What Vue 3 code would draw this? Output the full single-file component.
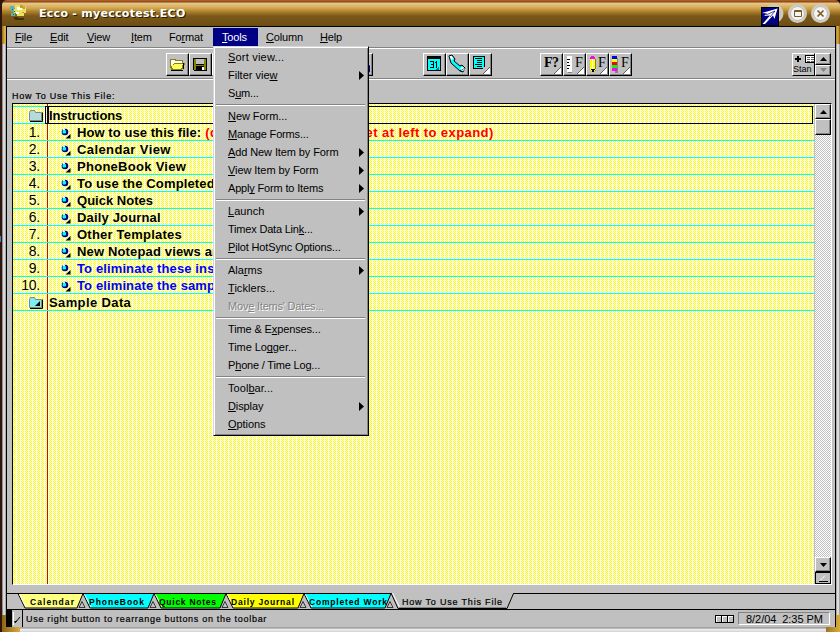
<script setup>
const menuBar = [
  { pre: '', key: 'F', post: 'ile', w: 35 },
  { pre: '', key: 'E', post: 'dit', w: 37 },
  { pre: '', key: 'V', post: 'iew', w: 44 },
  { pre: '', key: 'I', post: 'tem', w: 38 },
  { pre: 'Fo', key: 'r', post: 'mat', w: 44 },
  { pre: '', key: 'T', post: 'ools', w: 45, open: true },
  { pre: '', key: 'C', post: 'olumn', w: 54 },
  { pre: '', key: 'H', post: 'elp', w: 40 },
]
// An underscore precedes the mnemonic letter; ls is the tracking in pixels.
const groups = [
  [{ t: '_Sort view...', ls: 0.2 }, { t: 'Filter vie_w', sub: true, ls: 0 }, { t: 'S_um...', ls: -0.2 }],
  [{ t: '_New Form...', ls: -0.05 }, { t: '_Manage Forms...', ls: -0.17 }, { t: '_Add New Item by Form', sub: true, ls: -0.1 }, { t: '_View Item by Form', sub: true, ls: -0.07 }, { t: 'Appl_y Form to Items', sub: true, ls: -0.17 }],
  [{ t: '_Launch', sub: true, ls: 0.05 }, { t: 'Timex Data Lin_k...', ls: -0.2 }, { t: '_Pilot HotSync Options...', ls: -0.15 }],
  [{ t: 'Ala_rms', sub: true, ls: 0 }, { t: '_Ticklers...', ls: 0.05 }, { t: "Mov_e Items' Dates...", off: true, ls: -0.2 }],
  [{ t: 'Time & E_xpenses...', ls: -0.13 }, { t: 'Time Lo_gger...', ls: -0.08 }, { t: 'P_hone / Time Log...', ls: -0.18 }],
  [{ t: 'Tool_bar...', ls: 0.05 }, { t: '_Display', sub: true, ls: -0.1 }, { t: '_Options', ls: -0.05 }],
].map(g => g.map(i => {
  const n = i.t.indexOf('_')
  return { ...i, pre: i.t.slice(0, n), key: i.t[n + 1], post: i.t.slice(n + 2) }
}))
const rows = [
  { t: 'How to use this file:', red: '(double-click on the bullet at left to expand)', ls: 0.07 },
  { t: 'Calendar View', ls: 0.4 },
  { t: 'PhoneBook View', ls: 0.28 },
  { t: 'To use the Completed Work view', ls: 0.15 },
  { t: 'Quick Notes', ls: 0.02 },
  { t: 'Daily Journal', ls: 0.16 },
  { t: 'Other Templates', ls: 0.22 },
  { t: 'New Notepad views and folders', ls: 0.15 },
  { t: 'To eliminate these instructions', blue: true, ls: 0.12 },
  { t: 'To eliminate the sample data', blue: true, ls: 0.12 },
]
const tabs = [
  { t: 'Calendar', x: 18, r: 83, tx: 30, w: 44, c: '#ffff80' },
  { t: 'PhoneBook', x: 83, r: 154, tx: 89, w: 55, c: '#00ffff' },
  { t: 'Quick Notes', x: 154, r: 226, tx: 159, w: 57, c: '#00ff00' },
  { t: 'Daily Journal', x: 226, r: 304, tx: 231, w: 63, c: '#ffff00' },
  { t: 'Completed Work', x: 304, r: 391, tx: 309, w: 78, c: '#00ffff' },
]
</script>

<template>
  <div class="desk">
    <div class="win">
      <header class="title">
        <svg class="logo" width="18" height="18" viewBox="0 0 18 18" shape-rendering="crispEdges">
          <path d="M0 2h4v2h3v5h-2v3h-4v-3h2v-2h-2v-2h-1z" fill="#58b8b0" />
          <path d="M5 1h8v2h3v6h-2v3h-7v-3h-3v-4h1z" fill="#e8e060" />
          <path d="M7 3h5v3h-5zM6 8h3v2h-3z" fill="#fffff0" />
          <path d="M10 1h3v2h2v2h-2v-1h-3zM12 8h2v1h-2z" fill="#c8a018" />
          <path d="M4 13h4v1h6v2h-9z" fill="#3c3010" />
          <path d="M2 5h1v1h-1zM4 7h1v1h-1zM3 10h1v1h-1z" fill="#185860" />
        </svg>
        <span class="caption">Ecco - myeccotest.ECO</span>
        <svg class="tbtns" width="78" height="26" viewBox="0 0 78 26">
          <g stroke="#cfc9be" stroke-width="2" fill="#f4f4f4">
            <circle cx="18" cy="13.500" r="8.500" fill="#c8c4bc" />
            <circle cx="41.500" cy="13.500" r="8.500" />
            <circle cx="64.500" cy="13.500" r="8.500" />
          </g>
          <g stroke="#b8b2a6" stroke-width="1" fill="none">
            <circle cx="41.500" cy="13.500" r="7" />
            <circle cx="64.500" cy="13.500" r="7" />
          </g>
          <path d="M38.500 10.500h7v6h-7z M38 11.500h8" fill="none" stroke="#7b5a20" />
          <path d="M61.500 10.500l6 6M67.500 10.500l-6 6" stroke="#7b5a20" stroke-width="1.600" />
          <rect x="5" y="7" width="18" height="19" fill="#000" />
          <rect x="6" y="8" width="16" height="17" fill="#000084" />
          <path d="M21.500 8.500L18.500 19l-1.500-3.500-8 8.500h-2.500l7.500-8.500-6 .5 3-2.500-5-.5z" fill="#fff" />
          <path d="M19 11l-9 4M19 11l-5 6" stroke="#000084" stroke-width=".7" fill="none" />
        </svg>
      </header>

      <div class="body">
        <div class="client">
          <nav class="menubar">
            <div v-for="m in menuBar" :key="m.key" class="mi" :class="{ open: m.open }" :style="{ width: m.w + 'px' }">
              {{ m.pre }}<u>{{ m.key }}</u>{{ m.post }}
            </div>
          </nav>

          <div class="toolbar">
            <div class="tgroup g1">
              <button class="tb"><svg width="20" height="20" shape-rendering="crispEdges">
                <path d="M3 5h6v1h7v3h2v1l-3 6h-11v-2h-1z" fill="#848400" />
                <path d="M4 6h4v1h7v2h-8l-3 4z" fill="#fff" /><path d="M7 10h9l-2 5h-8l-2-4h3z" fill="#ffff60" />
                <path d="M4 16h12M16 15v-6" stroke="#000" fill="none" />
              </svg></button>
              <button class="tb"><svg width="20" height="20" shape-rendering="crispEdges">
                <path d="M3 4h14v13h-13l-1-1z" fill="#000" /><path d="M4 5h2v6h8v-6h2v11h-2v-4h-8v4h-2z" fill="#848400" />
                <path d="M6 5h8v5h-8z" fill="#c0c0c0" /><path d="M12 13h2v3h-2z" fill="#fff" />
              </svg></button>
              <button v-for="n in 7" :key="n" class="tb"><svg width="22" height="20"><path d="M15 11.500h3.500v6.500h-3.500z" fill="#fff" stroke="#000084" /></svg></button>
            </div>
            <div class="tgroup g2">
              <button class="tb"><svg width="20" height="20" shape-rendering="crispEdges">
                <path d="M3 2h14v15h-14z" fill="#000" /><path d="M4 5h12v11h-12z" fill="#0ff" /><path d="M15 12v4h-4z" fill="#008484" />
                <path d="M6 7h4v7h-4v-1h3v-2h-2v-1h2v-2h-3zM11 8h1v-1h1v7h-1v-5h-1z" fill="#000" />
              </svg></button>
              <button class="tb"><svg width="20" height="20">
                <path d="M2 2l3-1 3 4-1 2 6 5 2-1 3 3-2 4-3-1-9-8z" fill="#0ff" stroke="#000" />
                <path d="M2.500 2.500l2-.8 2 3-2 1.500zM13 14l3-1 2 2-2 2z" fill="#fff" />
                <path d="M13 17l5-3" stroke="#000" stroke-dasharray="1 1" />
              </svg></button>
              <button class="tb fold"><svg width="20" height="20" shape-rendering="crispEdges">
                <path d="M3 2h12v13h-12z" fill="#000" /><path d="M4 3h10v11h-10z" fill="#0ff" />
                <path d="M5 4h7v1h-7zM7 6h5v1h-5zM7 8h5v1h-5zM5 10h7v1h-7zM7 12h5v1h-5z" fill="#000" />
              </svg></button>
            </div>
            <div class="tgroup g3">
              <button class="tb fold"><span class="f">F?</span></button>
              <button class="tb fold"><svg width="20" height="20" shape-rendering="crispEdges">
                <path d="M4 4h4v15h-4z" fill="#848484" /><path d="M3 2h5v16h-5z" fill="#fff" /><path d="M3 5h3v1h-3zM3 8h2v1h-2zM3 11h3v1h-3zM3 14h2v1h-2z" fill="#000" />
              </svg><span class="f s">F</span></button>
              <button class="tb fold"><svg width="20" height="20" shape-rendering="crispEdges">
                <path d="M8 5h1v12h-2z" fill="#848484" /><path d="M4 2h3v1h1v2h-5v-2h1z" fill="#f0f" /><path d="M3 5h6v10l-2 3h-2l-2-3z" fill="#ff0" />
                <path d="M5 5h1v10h-1z" fill="#fff" /><path d="M8 5h1v10h-1z" fill="#848400" /><path d="M4 15h4v1h-1v2h-2v-2h-1z" fill="#000" />
              </svg><span class="f s">F</span></button>
              <button class="tb fold"><svg width="20" height="20" shape-rendering="crispEdges">
                <path d="M5 4h3v15h-3z" fill="#848484" /><path d="M2 2h5v3h-5z" fill="#00f" /><path d="M2 5h5v3h-5z" fill="#ff0" />
                <path d="M2 8h5v3h-5z" fill="#f00" /><path d="M2 11h5v3h-5z" fill="#0f0" /><path d="M2 14h5v3h-5z" fill="#f0f" />
              </svg><span class="f s">F</span></button>
            </div>
            <div class="picker">
              <div class="pick">
                <svg width="21" height="10" shape-rendering="crispEdges"><path d="M4 2h2v2h2v2h-2v2h-2v-2h-2v-2h2z" />
                  <path d="M12 1h10v8h-10z" fill="#000" /><path d="M13 2h9v6h-9z" fill="#fff" /><path d="M14 3h3v1h-3zM18 3h3v1h-3zM14 5h3v1h-3zM18 5h3v1h-3zM14 7h3v1h-3zM18 7h3v1h-3z" fill="#606060" /></svg>
                <span>Stan</span>
              </div>
              <div class="spin">
                <i class="arrow"><svg width="7" height="4"><path d="M0 4L3.500 0L7 4z" /></svg></i>
                <i class="arrow"><svg width="7" height="4"><path d="M0 0L3.500 4L7 0z" fill="#848484" /></svg></i>
              </div>
            </div>
          </div>

          <div class="viewname">How To Use This File:</div>

          <div class="pad">
            <main class="sheet">
              <div class="folder first">
                <svg class="fi" width="16" height="14"><path d="M1.500 11.500v-8l1-2h4l1 2h6v8z" fill="#b4dcdc" stroke="#848484" /><path d="M2 12.500h12.500v-9" fill="none" stroke="#000" /></svg>
                <div class="focus"><span>Instructions</span></div>
              </div>
              <div v-for="(r, i) in rows" :key="i" class="row" :class="{ blue: r.blue }" :style="{ letterSpacing: r.ls + 'px' }">
                <span class="num">{{ i + 1 }}.</span>
                <svg class="bul" width="12" height="12"><circle cx="4" cy="4" r="3.300" fill="#000084" /><rect x="1.500" y="2" width="3.500" height="3.500" rx="1" fill="#0ff" /><path d="M2 1.500h2" stroke="#fff" /><path d="M9.500 6v4.500h-5z" fill="#000" /></svg>
                <b>{{ r.t }}</b><b v-if="r.red" class="red">{{ r.red }}</b>
              </div>
              <div class="folder">
                <svg class="fi" width="16" height="14"><path d="M1.500 11.500v-8l1-2h4l1 2h6v8z" fill="#7cf0f0" stroke="#848484" /><path d="M2 12.500h12.500v-9" fill="none" stroke="#000" /><path d="M12 5v5h-5z" fill="#000" /></svg>
                <b class="fname">Sample Data</b>
              </div>
            </main>
            <aside class="scroll">
              <i class="arrow up"><svg width="7" height="4"><path d="M0 4L3.500 0L7 4z" /></svg></i>
              <i class="thumb"></i>
              <i class="track"></i>
              <i class="arrow dn"><svg width="7" height="4"><path d="M0 0L3.500 4L7 0z" /></svg></i>
              <i class="grip"><svg width="14" height="9"><path d="M3 7.500h9" stroke="#000" /><path d="M4 6.500l5-5" stroke="#fff" /></svg></i>
            </aside>
          </div>

          <svg class="tabs" width="828" height="18" viewBox="7 592 828 18">
            <path d="M7 593h828v1h-828zM7 609h828v1h-828z" shape-rendering="crispEdges" />
            <g v-for="t in tabs" :key="t.t">
              <path :d="`M${t.x} 593.500L${t.x + 7} 608H${t.r - 6}L${t.r} 593.500z`" :fill="t.c" stroke="#000" />
              <path :d="`M${t.x + 1.5} 594.500L${t.x + 8} 607`" stroke="#fff" />
              <path :d="`M${t.r - 4} 607.500L${t.r - 1} 601.500L${t.r + 2} 607.500z`" fill="#c0c0c0" stroke="#000" stroke-width=".7" />
              <text :x="t.tx" y="604.500" :textLength="t.w" class="tabtext b">{{ t.t }}</text>
            </g>
            <path d="M391 592.500L398 608.500H507L513.500 592.500z" fill="#c0c0c0" />
            <path d="M391 593L398 608.500H507L513.500 593.500" fill="none" stroke="#000" />
            <path d="M392.500 593L399.500 607" stroke="#fff" /><path d="M399 607.500H506" stroke="#848484" />
            <text x="402" y="604.500" textLength="100" class="tabtext m">How To Use This File</text>
          </svg>

          <footer class="status">
            <i class="blk"></i>
            <i class="pull"><svg width="9" height="14"><path d="M1.500 0v13" stroke="#fff" /><path d="M2 10l3-1M3 11l5-6" stroke="#000" fill="none" /></svg></i>
            <span class="hint">Use right button to rearrange buttons on the toolbar</span>
            <svg class="cells" width="19" height="8" shape-rendering="crispEdges"><path d="M0 0h19v8h-19z" fill="#000" /><path d="M1 1h5v6h-5zM7 1h5v6h-5zM13 1h5v6h-5z" fill="#fff" /><path d="M2 2h4v5h-4zM8 2h4v5h-4zM14 2h4v5h-4z" fill="#c0c0c0" /></svg>
            <span class="clock">8/2/04&nbsp; 2:35 PM</span>
          </footer>
        </div>
      </div>
    </div>

    <i class="corner bl"></i><i class="corner br"></i><i class="speck"></i>

    <div class="menu">
      <template v-for="(g, gi) in groups" :key="gi">
        <div v-if="gi" class="sep"></div>
        <div v-for="i in g" :key="i.t" class="item" :class="{ off: i.off }" :style="{ letterSpacing: i.ls + 'px' }">
          <span>{{ i.pre }}<u>{{ i.key }}</u>{{ i.post }}</span>
          <svg v-if="i.sub" width="5" height="9"><path d="M0 0L5 4.500L0 9z" /></svg>
        </div>
      </template>
    </div>
  </div>
</template>

<style>
body { overflow: hidden; background: #2a100c; }
</style>
<style scoped>
* { box-sizing: border-box; }
i { display: block; font-style: normal; }
b { display: block; }
.desk { position: relative; width: 840px; height: 632px; overflow: hidden; font-family: "Liberation Sans", Arial, sans-serif; font-size: 11px; color: #000; background: linear-gradient(90deg, #30140e, #1a0806); padding-left: 2px; }
.win { width: 838px; height: 632px; display: flex; flex-direction: column; }
.title { height: 26px; display: flex; align-items: center; border-top-left-radius: 5px; border-top-right-radius: 5px; background: linear-gradient(180deg, #b45a28 0, #b45a28 1px, #6e4410 2px, #e8c98c 3px, #d4a850 8px, #a87c28 12px, #7a581a 16px, #735216 22px, #6b4c12 26px); }
.logo { margin: -1px 10px 0 8px; }
.caption { flex: 1; font: bold 11px "DejaVu Sans", sans-serif; letter-spacing: .28px; color: #fff; text-shadow: 1px 1px 0 #2c1c00; margin-left: 1px; }
.tbtns { margin-right: 6px; }
.body { flex: 1; display: flex; padding: 0 4px 5px; background: linear-gradient(90deg, #8c6a20 0, #e6bc50 3px, #a67c20 5px, #a67c20 833px, #d8a83c 836px, #7c5810 838px) 0 0 / 100% 18px no-repeat, linear-gradient(180deg, #c0c0c0 0, #848484 1px, #f0f0f0 2px, #d4d4d4 5px) 0 100% / 100% 5px no-repeat, linear-gradient(90deg, #707070, #f4f4f4 2px, #909090 4px, #909090 834px, #f4f4f4 836px, #8a8a8a 838px); }
.client { width: 830px; display: flex; flex-direction: column; background: #c0c0c0; border: 1px solid #000; border-bottom: 0; }
.menubar { height: 21px; padding: 1px 0 0 8px; display: flex; border-bottom: 1px solid #848484; }
.mi { height: 18px; line-height: 19px; letter-spacing: -.15px; white-space: nowrap; flex: none; }
.mi.open { background: #000084; color: #fff; padding-left: 9px; margin-right: 8px; }
.toolbar { height: 31px; display: flex; align-items: flex-start; padding-top: 4px; border-top: 1px solid #fff; border-bottom: 1px solid #848484; }
.tgroup { display: flex; }
.g1 { margin-left: 159px; }
.g2 { margin-left: 50px; }
.g3 { margin-left: 48px; }
.tb { position: relative; width: 23px; height: 23px; padding: 0; border: 1px solid #fff; border-right-color: #000; border-bottom-color: #000; background: #c0c0c0; box-shadow: inset -1px -1px #848484; display: flex; color: #000; }
.tb svg { display: block; flex: none; }
.fold::after { content: ""; position: absolute; right: 1px; bottom: 1px; width: 7px; height: 7px; background: linear-gradient(135deg, #c0c0c0 45%, #606060 46%, #606060 54%, #fff 55%); }
.f { font: bold 14px/17px "Liberation Serif", serif; margin: 0 0 0 3px; letter-spacing: -.5px; }
.f.s { margin-left: -9px; font-weight: normal; font-size: 14px; }
.picker { display: flex; margin-left: 160px; }
.pick { width: 23px; height: 23px; border: 1px solid #fff; border-right-color: #000; border-bottom-color: #000; overflow: hidden; white-space: nowrap; font-size: 9px; line-height: 11px; }
.pick svg, .pick span { display: block; }
.spin { width: 16px; }
.arrow { display: flex; align-items: center; justify-content: center; background: #c0c0c0; border: 1px solid #fff; border-right-color: #000; border-bottom-color: #000; box-shadow: inset -1px -1px #848484; }
.spin .arrow { height: 11.500px; }
.viewname { height: 24px; border-top: 1px solid #fff; padding: 11px 0 0 5px; font-size: 9px; letter-spacing: .76px; line-height: 11px; white-space: nowrap; -webkit-text-stroke: .2px #000; }
.pad { height: 482px; margin: 0 3px 0 5px; display: flex; border-left: 1px solid #000; border-top: 1px solid #000; border-bottom: 1px solid #fff; border-right: 1px solid #fff; }
.sheet {
  width: 801px; padding-top: 2px; overflow: hidden;
  background: linear-gradient(#c01000, #c01000) 34px 0 / 1px 100% no-repeat,
    linear-gradient(90deg, #fff 1px, transparent 1px) 3px 0 / 4px 2px,
    conic-gradient(#ff0 25%, #fff 0 50%, #ff0 0 75%, #fff 0) 0 0 / 2px 2px;
}
.folder, .row { height: 17px; display: flex; border-bottom: 1px solid #0ff; white-space: nowrap; font-size: 13px; line-height: 17px; }
.folder.first { height: 18px; border-top: 1px solid #0ff; }
.fi { margin: 2px 0 0 15px; flex: none; }
.focus { width: 768px; height: 18px; margin: -1px 0 0 1px; border: 1px solid #000; font-weight: bold; padding-left: 1px; line-height: 17px; }
.focus span { display: block; border-left: 2px solid #000060; letter-spacing: -.1px; }
.fname { margin-left: 5px; letter-spacing: .38px; }
.num { width: 27px; text-align: right; flex: none; font-size: 14px; letter-spacing: -.2px; }
.bul { margin: 4px 4px 0 21px; flex: none; }
.row .red { color: #f00; margin-left: 4px; letter-spacing: .43px; }
.blue b { color: #00f; }
.scroll { width: 17px; display: flex; flex-direction: column; padding-left: 1px; }
.up { height: 15px; }
.thumb { height: 16px; background: #c0c0c0; border: 1px solid #fff; border-right-color: #000; border-bottom-color: #000; box-shadow: inset -1px -1px #848484; }
.track { flex: 1; background: conic-gradient(#fff 25%, #c0c0c0 0 50%, #fff 0 75%, #c0c0c0 0) 0 0 / 2px 2px; }
.dn { height: 15px; }
.grip { height: 12px; border: 1px solid #000; }
.tabs { display: block; margin-top: 7px; flex: none; }
.tabtext { font: 9px "Liberation Sans", sans-serif; }
.tabtext.b { font-weight: bold; font-size: 8.500px; }
.tabtext.m { stroke: #000; stroke-width: .2px; }
.status { height: 17px; display: flex; align-items: center; }
.blk { width: 5px; height: 17px; background: #000; }
.pull { width: 11px; height: 17px; padding-top: 2px; border-right: 1px solid #000; }
.hint { margin: 1px 0 0 3px; flex: 1; font-size: 9px; letter-spacing: .7px; white-space: nowrap; -webkit-text-stroke: .2px #000; }
.cells { margin-right: 4px; }
.clock { width: 92px; height: 13px; margin-right: 5px; border: 1px solid #848484; border-right-color: #fff; border-bottom-color: #fff; line-height: 12px; padding-left: 7px; letter-spacing: -.05px; white-space: nowrap; }
.corner { position: absolute; bottom: 0; height: 17px; width: 18px; background: linear-gradient(90deg, #8c6414, #d8ac40); }
.bl { left: 2px; clip-path: polygon(0 0, 4px 0, 4px 12px, 18px 12px, 18px 17px, 0 17px); }
.br { right: 0; clip-path: polygon(14px 0, 18px 0, 18px 17px, 4px 17px, 4px 12px, 14px 12px); }
.speck { position: absolute; left: 0; top: 236px; width: 1px; height: 6px; background: #5080b0; }
.menu { position: absolute; left: 213px; top: 46px; width: 156px; height: 390px; padding: 1px; background: #c0c0c0; border: 1px solid #d8d8d8; border-right-color: #000; border-bottom-color: #000; box-shadow: inset 1px 1px #fff, inset -1px -1px #848484; }
.item { height: 18px; display: flex; align-items: center; padding: 0 3px 0 13px; white-space: nowrap; line-height: 18px; }
.item span { flex: 1; }
.item.off { color: #848484; text-shadow: 1px 1px #fff; }
.sep { height: 5px; margin: 0 2px 0 1px; background: linear-gradient(#848484, #848484) 0 2px / 100% 1px no-repeat, linear-gradient(#fff, #fff) 0 3px / 100% 1px no-repeat; }
u { text-underline-offset: 1px; text-decoration-thickness: 1px; text-decoration-skip-ink: none; }
</style>
